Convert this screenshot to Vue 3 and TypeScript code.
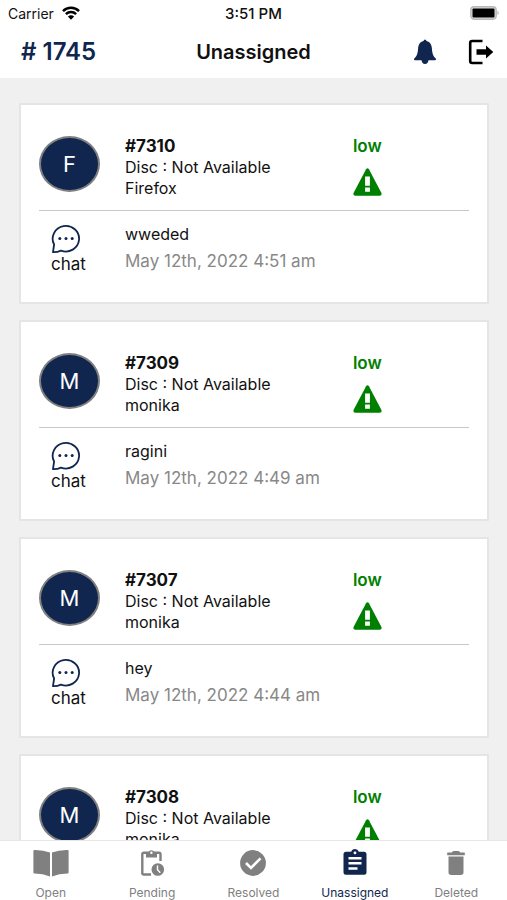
<script setup lang="ts">
interface Ticket {
  id: number
  initial: string
  name: string
  message: string
  time: string
  priority: string
}

interface Tab {
  label: string
  icon: 'open' | 'pending' | 'resolved' | 'unassigned' | 'deleted'
  active?: boolean
}

const tickets: Ticket[] = [
  { id: 7310, initial: 'F', name: 'Firefox', message: 'wweded', time: 'May 12th, 2022 4:51 am', priority: 'low' },
  { id: 7309, initial: 'M', name: 'monika', message: 'ragini', time: 'May 12th, 2022 4:49 am', priority: 'low' },
  { id: 7307, initial: 'M', name: 'monika', message: 'hey', time: 'May 12th, 2022 4:44 am', priority: 'low' },
  { id: 7308, initial: 'M', name: 'monika', message: '', time: '', priority: 'low' },
]

const tabs: Tab[] = [
  { label: 'Open', icon: 'open' },
  { label: 'Pending', icon: 'pending' },
  { label: 'Resolved', icon: 'resolved' },
  { label: 'Unassigned', icon: 'unassigned', active: true },
  { label: 'Deleted', icon: 'deleted' },
]
</script>

<template>
  <div class="screen">
    <div class="status">
      <div class="carrier">
        <span>Carrier</span>
        <svg width="18" height="14" viewBox="0 0 18 14" aria-hidden="true">
          <g fill="none" stroke="#000" stroke-width="2.5">
            <path d="M1 5.1a11.3 11.3 0 0 1 16 0" />
            <path d="M3.9 8.2a7.2 7.2 0 0 1 10.2 0" />
          </g>
          <path d="M9 13.8 5.9 10.6a4.4 4.4 0 0 1 6.2 0z" fill="#000" />
        </svg>
      </div>
      <span class="clock">3:51 PM</span>
      <svg class="battery" width="30" height="14" viewBox="0 0 30 14" aria-hidden="true">
        <rect x="1.8" y="0.8" width="25.4" height="12.4" rx="3.4" fill="#ddd" stroke="#b8b8b8" stroke-width="1.4" />
        <rect x="3.5" y="2.5" width="22" height="9" rx="1" fill="#000" />
        <path d="M28.500 4.800c1.600.6 1.600 3.800 0 4.400z" fill="#b4b4b4" />
      </svg>
    </div>

    <header class="header">
      <span class="count"># 1745</span>
      <h1 class="title">Unassigned</h1>
      <div class="actions">
        <button type="button" aria-label="Notifications">
          <svg width="24" height="26" viewBox="0 0 24 26" fill="#10264f">
            <path d="M12 .5q1.200 0 1.500 1.600C17.200 3.100 18.600 6 18.900 9.500C19.300 15 20.300 17.500 22.600 19.300Q23.800 20.800 22.300 21.200H15.500Q15 24.900 12 24.900T8.500 21.200H1.700Q.2 20.800 1.400 19.300C3.700 17.500 4.700 15 5.100 9.500C5.400 6 6.800 3.100 10.500 2.100Q10.800.5 12 .5z" />
          </svg>
        </button>
        <button type="button" aria-label="Log out">
          <svg width="26" height="26" viewBox="0 0 26 26">
            <path d="M14.500 2H4.200Q2.200 2 2.200 4v18q0 2 2 2h10.300" fill="none" stroke="#000" stroke-width="2.600" />
            <path d="M8.500 10.200h9.500V6.400l7.300 6.600-7.300 6.600v-3.800H8.500z" fill="#000" />
          </svg>
        </button>
      </div>
    </header>

    <main class="list">
      <article v-for="ticket in tickets" :key="ticket.id" class="card">
        <div class="row top">
          <div class="avatar">{{ ticket.initial }}</div>
          <div>
            <h2 class="number">#{{ ticket.id }}</h2>
            <p>Disc : Not Available</p>
            <p>{{ ticket.name }}</p>
          </div>
          <div class="priority">
            <span>{{ ticket.priority }}</span>
            <svg width="29" height="28" viewBox="0 0 30 28" preserveAspectRatio="none" aria-hidden="true">
              <path d="M13.500 1.300q1.500-2 3 0L29.300 24.700Q30.400 27.500 27.700 27.700H2.300Q-.4 27.500.7 24.700z" fill="#008000" />
              <path d="M12.500 8.500h5v9.300h-5zM12.500 19.500h5v4.200h-5z" fill="#fff" />
            </svg>
          </div>
        </div>
        <div v-if="ticket.message" class="row bottom">
          <div class="channel">
            <svg width="30" height="30" viewBox="0 0 30 30" aria-hidden="true">
              <path d="M2 28.200 3.100 20.500A13.200 12.800 0 1 1 10 26.600Q6.500 28.300 2 28.200z" fill="none" stroke="#10264f" stroke-width="1.800" stroke-linejoin="round" />
              <g fill="#10264f">
                <circle cx="8.800" cy="14.500" r="1.500" />
                <circle cx="15" cy="14.500" r="1.500" />
                <circle cx="21.200" cy="14.500" r="1.500" />
              </g>
            </svg>
            <span>chat</span>
          </div>
          <div class="message">
            <p>{{ ticket.message }}</p>
            <time>{{ ticket.time }}</time>
          </div>
        </div>
      </article>
    </main>

    <nav class="tabs">
      <a v-for="tab in tabs" :key="tab.label" href="#" class="tab" :class="{ active: tab.active }">
        <svg v-if="tab.icon === 'open'" width="36" height="28" viewBox="0 0 36 28" fill="currentColor">
          <path d="M1.400 1Q10 .8 17 3.600V27.500Q10 24.800 1.400 24.600Q.4 24.500.4 23.600V2Q.4 1 1.400 1z" />
          <path d="M34.600 1Q26 .8 19 3.600V27.500Q26 24.800 34.600 24.600Q35.600 24.500 35.600 23.600V2Q35.600 1 34.600 1z" />
        </svg>
        <svg v-else-if="tab.icon === 'pending'" width="28" height="28" viewBox="0 0 28 28">
          <path d="M13 25.500H5.800Q4.300 25.500 4.300 24V5.200Q4.300 3.700 5.800 3.700H21Q22.500 3.700 22.500 5.200V12" fill="none" stroke="currentColor" stroke-width="2.400" />
          <path d="M8 3h2.400a3.400 3.400 0 0 1 6 0H19v5.600H8z" fill="currentColor" />
          <circle cx="13.400" cy="3.800" r="1.200" fill="#fff" />
          <circle cx="19.800" cy="20.500" r="6.300" fill="currentColor" />
          <path d="M19.500 16.500v4.300l2.800 2.900" fill="none" stroke="#fff" stroke-width="1.400" />
        </svg>
        <svg v-else-if="tab.icon === 'resolved'" width="28" height="28" viewBox="0 0 28 28">
          <circle cx="14" cy="14" r="12.900" fill="currentColor" />
          <path d="m7 14 5 5 9.500-9.600" fill="none" stroke="#fff" stroke-width="2.600" />
        </svg>
        <svg v-else-if="tab.icon === 'unassigned'" width="28" height="28" viewBox="0 0 28 28">
          <path d="M5 2.800h5.200a4 4 0 0 1 7.600 0H23q2.500 0 2.500 2.500v18q0 2.500-2.500 2.500H5q-2.500 0-2.500-2.500v-18q0-2.500 2.500-2.500z" fill="currentColor" />
          <circle cx="14" cy="3.900" r="1.400" fill="#fff" />
          <path d="M7.500 9.200h13M7.500 14.300h13M7.500 19.500h9" stroke="#fff" stroke-width="2.400" />
        </svg>
        <svg v-else width="28" height="28" viewBox="0 0 28 28" fill="currentColor">
          <path d="M5.200 3.500h4.600l1.300-1.400h5.800l1.300 1.400h4.600v2.700H5.200zM6.500 7.500h15v15.700q0 2.700-2.700 2.700H9.200q-2.700 0-2.700-2.700z" />
        </svg>
        <span>{{ tab.label }}</span>
      </a>
    </nav>
  </div>
</template>

<style>
body {
  margin: 0;
}
</style>

<style scoped>
.screen {
  display: flex;
  flex-direction: column;
  height: 100vh;
  background: #f0f0f0;
  color: #111;
  font-family: Inter, 'Liberation Sans', sans-serif;
  font-size: 16px;
  line-height: 21px;
}

h1,
h2,
p {
  margin: 0;
}

svg {
  display: block;
}

.status {
  display: grid;
  grid-template-columns: 1fr auto 1fr;
  align-items: center;
  height: 26px;
  padding: 0 8px;
  background: #fff;
  font-size: 14px;
}

.carrier {
  display: flex;
  align-items: center;
  gap: 8px;
}

.clock {
  font-size: 15px;
  font-weight: 500;
}

.battery {
  justify-self: end;
}

.header {
  display: grid;
  grid-template-columns: 1fr auto 1fr;
  align-items: center;
  height: 52px;
  padding: 0 13px;
  background: #fff;
  line-height: 28px;
}

.count {
  padding-left: 8px;
  color: #10264f;
  font-size: 24px;
  font-weight: 600;
}

.title {
  font-size: 20px;
  font-weight: 600;
}

.actions {
  display: flex;
  justify-content: flex-end;
  gap: 31px;
}

.actions button {
  padding: 0;
  border: 0;
  background: none;
}

.list {
  display: flex;
  flex: 1;
  flex-direction: column;
  gap: 16px;
  min-height: 0;
  padding: 25px 18px 16px 19px;
  overflow-y: auto;
  scrollbar-width: none;
}

.card {
  flex: none;
  padding: 31px 18px 27px;
  border: 2px solid #e3e5e6;
  background: #fff;
}

.row {
  display: grid;
  grid-template-columns: 20% 53% 1fr;
}

.top {
  padding-bottom: 11px;
  border-bottom: 1px solid #c8c8c8;
}

.avatar {
  display: flex;
  align-items: center;
  justify-content: center;
  box-sizing: border-box;
  width: 61px;
  height: 56px;
  border: 2px solid #808080;
  border-radius: 50%;
  background: #10264f;
  color: #fff;
  font-size: 22px;
}

.number {
  font-size: 17px;
  font-weight: 700;
}

.priority {
  display: flex;
  flex-direction: column;
  align-items: flex-start;
  gap: 11px;
  color: #008000;
  font-size: 17px;
  font-weight: 600;
}

.bottom {
  padding-top: 13px;
}

.channel {
  display: flex;
  flex-direction: column;
  padding-left: 12px;
  font-size: 17px;
}

.message {
  display: flex;
  flex-direction: column;
  grid-column: 2 / 4;
  gap: 6px;
}

.message time {
  color: #888;
  font-size: 17px;
}

.tabs {
  display: grid;
  grid-template-columns: repeat(5, 1fr);
  height: 59px;
  border-top: 1px solid #e6e6e6;
  background: #fff;
}

.tab {
  display: flex;
  flex-direction: column;
  align-items: center;
  gap: 7px;
  padding-top: 8px;
  color: #808080;
  font-size: 12px;
  line-height: 18px;
  text-decoration: none;
}

.tab.active {
  color: #10264f;
}
</style>
